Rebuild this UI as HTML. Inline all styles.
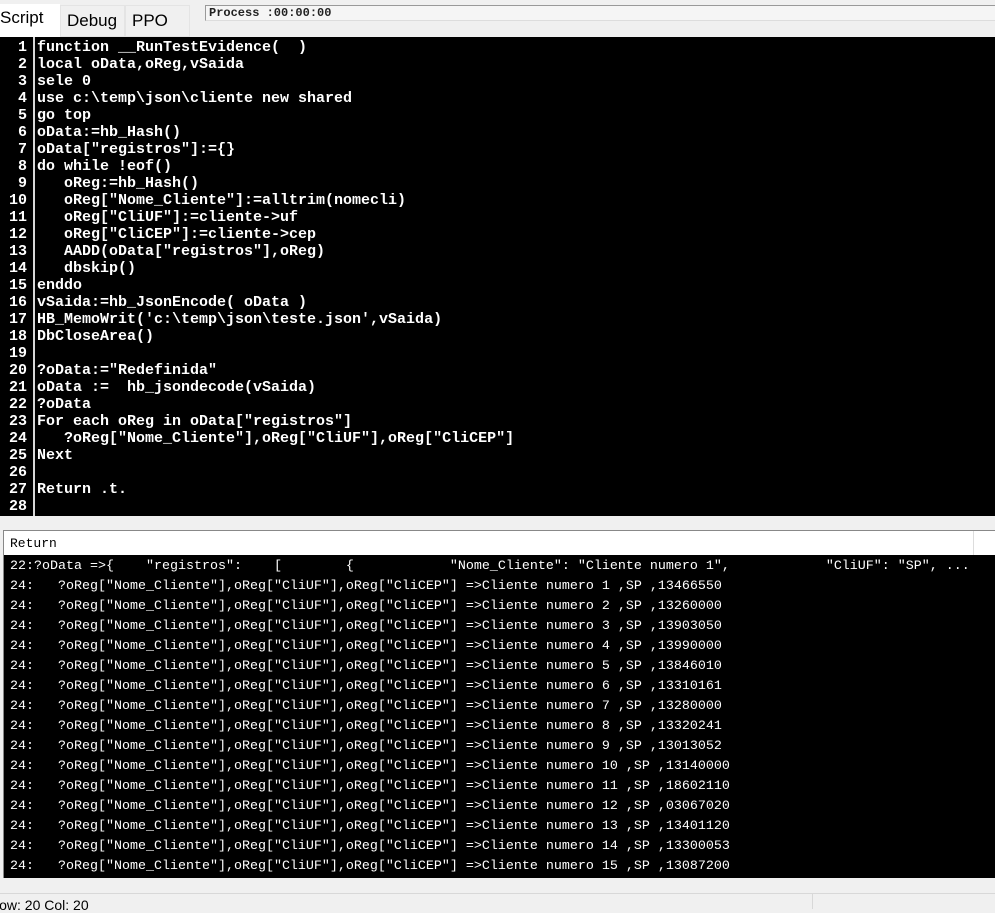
<!DOCTYPE html>
<html><head><style>
body{margin:0;width:995px;height:909px;background:#f0f0f0;position:relative;overflow:hidden;font-family:"Liberation Sans",sans-serif}
.tab{position:absolute;top:5px;height:32px;font-size:17px;line-height:28px;box-sizing:border-box}
#ed{position:absolute;left:0;top:37px;width:995px;height:479px;background:#000}
#gut{position:absolute;left:33px;top:0;width:2px;height:479px;background:#d8d8d8}
.ln{position:absolute;left:0;width:27px;text-align:right;color:#fff;font:bold 15px/17px "Liberation Mono",monospace}
.code{position:absolute;left:37px;top:2px;color:#fff;font:bold 15px/17px "Liberation Mono",monospace;white-space:pre;margin:0}
#out{position:absolute;left:3px;top:530px;width:992px;height:348px;background:#000;border-top:1px solid #888;border-left:1px solid #888;box-sizing:border-box}
#hdr{position:absolute;left:0;top:0;width:100%;height:24px;background:#fff;font:13px/25px "Liberation Mono",monospace;padding-left:6px;box-sizing:border-box;color:#000}
#hdr i{position:absolute;left:969px;top:0;width:1px;height:24px;background:#ddd}
.o{position:absolute;left:6px;top:26px;margin:0;color:#fff;font:13.33px/20px "Liberation Mono",monospace;white-space:pre}
</style></head><body>
<div class="tab" style="left:0;width:60px;background:#fff;padding-left:0;font-size:17px;top:4px;height:33px">Script</div>
<div class="tab" style="left:60px;width:65px;background:#f0f0f0;border:1px solid #e4e4e4;padding-left:6px;line-height:30px">Debug</div>
<div class="tab" style="left:125px;width:65px;background:#f0f0f0;border:1px solid #e4e4e4;padding-left:6px;line-height:30px">PPO</div>
<div style="position:absolute;left:205px;top:5px;width:790px;height:16px;background:#f5f5f5;border-top:1px solid #999;border-left:1px solid #999;border-bottom:1px solid #ddd;box-sizing:border-box;font:bold 12px/14px 'Liberation Mono',monospace;padding-left:3px;color:#222">Process :00:00:00</div>
<div id="ed"><div id="gut"></div>
<div class="ln" style="top:2px;white-space:pre">1
2
3
4
5
6
7
8
9
10
11
12
13
14
15
16
17
18
19
20
21
22
23
24
25
26
27
28</div>
<pre class="code">function __RunTestEvidence(  )
local oData,oReg,vSaida
sele 0
use c:\temp\json\cliente new shared
go top
oData:=hb_Hash()
oData["registros"]:={}
do while !eof()
   oReg:=hb_Hash()
   oReg["Nome_Cliente"]:=alltrim(nomecli)
   oReg["CliUF"]:=cliente->uf
   oReg["CliCEP"]:=cliente->cep
   AADD(oData["registros"],oReg)
   dbskip()
enddo
vSaida:=hb_JsonEncode( oData )
HB_MemoWrit('c:\temp\json\teste.json',vSaida)
DbCloseArea()

?oData:="Redefinida"
oData :=  hb_jsondecode(vSaida)
?oData
For each oReg in oData["registros"]
   ?oReg["Nome_Cliente"],oReg["CliUF"],oReg["CliCEP"]
Next

Return .t.
</pre></div>
<div id="out"><div id="hdr">Return<i></i></div>
<pre class="o">22:?oData =>{    "registros":    [        {            "Nome_Cliente": "Cliente numero 1",            "CliUF": "SP", ...
24:   ?oReg["Nome_Cliente"],oReg["CliUF"],oReg["CliCEP"] =>Cliente numero 1 ,SP ,13466550
24:   ?oReg["Nome_Cliente"],oReg["CliUF"],oReg["CliCEP"] =>Cliente numero 2 ,SP ,13260000
24:   ?oReg["Nome_Cliente"],oReg["CliUF"],oReg["CliCEP"] =>Cliente numero 3 ,SP ,13903050
24:   ?oReg["Nome_Cliente"],oReg["CliUF"],oReg["CliCEP"] =>Cliente numero 4 ,SP ,13990000
24:   ?oReg["Nome_Cliente"],oReg["CliUF"],oReg["CliCEP"] =>Cliente numero 5 ,SP ,13846010
24:   ?oReg["Nome_Cliente"],oReg["CliUF"],oReg["CliCEP"] =>Cliente numero 6 ,SP ,13310161
24:   ?oReg["Nome_Cliente"],oReg["CliUF"],oReg["CliCEP"] =>Cliente numero 7 ,SP ,13280000
24:   ?oReg["Nome_Cliente"],oReg["CliUF"],oReg["CliCEP"] =>Cliente numero 8 ,SP ,13320241
24:   ?oReg["Nome_Cliente"],oReg["CliUF"],oReg["CliCEP"] =>Cliente numero 9 ,SP ,13013052
24:   ?oReg["Nome_Cliente"],oReg["CliUF"],oReg["CliCEP"] =>Cliente numero 10 ,SP ,13140000
24:   ?oReg["Nome_Cliente"],oReg["CliUF"],oReg["CliCEP"] =>Cliente numero 11 ,SP ,18602110
24:   ?oReg["Nome_Cliente"],oReg["CliUF"],oReg["CliCEP"] =>Cliente numero 12 ,SP ,03067020
24:   ?oReg["Nome_Cliente"],oReg["CliUF"],oReg["CliCEP"] =>Cliente numero 13 ,SP ,13401120
24:   ?oReg["Nome_Cliente"],oReg["CliUF"],oReg["CliCEP"] =>Cliente numero 14 ,SP ,13300053
24:   ?oReg["Nome_Cliente"],oReg["CliUF"],oReg["CliCEP"] =>Cliente numero 15 ,SP ,13087200</pre></div>
<div style="position:absolute;left:0;top:893px;width:995px;height:1px;background:#d8d8d8"></div>
<div style="position:absolute;left:812px;top:894px;width:1px;height:15px;background:#d8d8d8"></div>
<div style="position:absolute;left:-11px;top:898px;font-size:14px;line-height:14px;color:#000">Row: 20 Col: 20</div>
</body></html>
